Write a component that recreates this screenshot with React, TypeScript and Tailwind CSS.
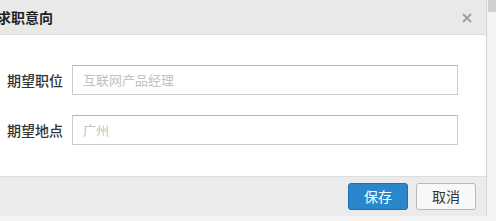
export default function App() {
  const font = { fontFamily: '"Microsoft YaHei", "Noto Sans CJK SC", "Liberation Sans", sans-serif' };
  return (
    <div className="relative h-[221px] w-[496px] overflow-hidden bg-[#f4f4f4]" style={font}>
      <div className="absolute right-0 top-0 h-[12px] w-[8px] bg-[#cfcfcf]" />
      <div className="flex h-[216px] w-[487px] flex-col border-r border-[#d4d4d4] bg-white">
        <div className="flex h-[35px] shrink-0 items-center justify-between border-b border-[#dcdcdc] bg-[#e9eae8] pr-[14px]">
          <span className="ml-[-3px] text-[14px] font-bold text-[#222]">求职意向</span>
          <svg width="10" height="10" viewBox="0 0 10 10" className="mt-[1px]">
            <path d="M1 1L9 9M9 1L1 9" stroke="#a0a0a0" strokeWidth="2" />
          </svg>
        </div>
        <div className="flex flex-1 flex-col gap-[20px] pt-[30px]">
          <div className="flex items-center">
            <span className="w-[72px] pl-[7px] text-[14px] font-medium text-[#333]">期望职位</span>
            <div className="flex h-[30px] w-[386px] items-center border border-[#cccccc] border-t-[#b5b5b5] pl-[10px] text-[13px] text-[#c2c2c2]">
              互联网产品经理
            </div>
          </div>
          <div className="flex items-center">
            <span className="w-[72px] pl-[7px] text-[14px] font-medium text-[#333]">期望地点</span>
            <div className="flex h-[30px] w-[386px] items-center border border-[#cccccc] border-t-[#b5b5b5] pl-[10px] text-[13px] text-[#c2c2c2]">
              广州
            </div>
          </div>
        </div>
        <div className="flex h-[40px] shrink-0 items-center justify-end gap-[8px] border-t border-[#dedede] bg-[#ebebeb] pr-[10px]">
          <button className="h-[27px] w-[60px] rounded-[3px] border border-[#1f6fae] bg-[#2a87cb] text-[14px] text-white">保存</button>
          <button className="h-[27px] w-[60px] rounded-[3px] border border-[#b8b8b8] bg-[#f8f8f8] text-[14px] text-[#333]">取消</button>
        </div>
      </div>
    </div>
  );
}
